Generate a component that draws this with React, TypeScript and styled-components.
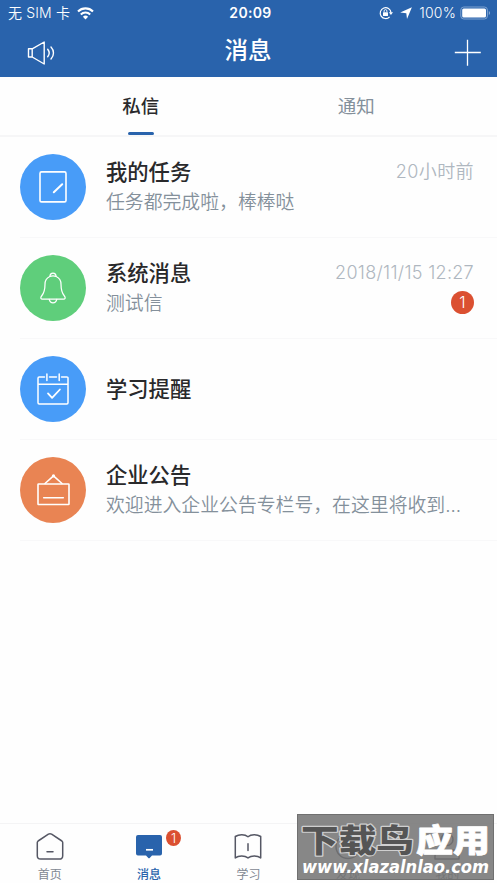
import React from "react";
import styled, { createGlobalStyle } from "styled-components";

const GlobalStyle = createGlobalStyle`
  * { box-sizing: border-box; }
  html, body { margin: 0; padding: 0; background: #fefefe; }
  body { font-family: Inter, "Noto Sans CJK SC", sans-serif; overflow: hidden; }
  svg { display: block; flex: none; }
`;

const Screen = styled.div`
  position: relative;
  display: flex;
  flex-direction: column;
  width: 497px;
  height: 883px;
  background: #fefefe;
  overflow: hidden;
`;

const Header = styled.header`
  height: 77px;
  background: #2963ac;
  color: #fff;
`;

const StatusBar = styled.div`
  display: grid;
  grid-template-columns: 1fr auto 1fr;
  align-items: center;
  height: 26px;
  padding: 0 6px 0 8px;
  font-size: 14px;
  line-height: 20px;
`;

const Carrier = styled.div`
  display: flex;
  align-items: center;
  gap: 7px;
  font-weight: 350;
  letter-spacing: 0.15px;
  white-space: nowrap;
`;

const Clock = styled.div`
  padding-left: 2px;
  font-weight: 600;
  letter-spacing: 0.35px;
`;

const StatusIcons = styled.div`
  display: flex;
  justify-content: flex-end;
  align-items: center;
`;

const BatteryText = styled.span`
  margin: 0 4px 0 7px;
  font-size: 14px;
  font-weight: 350;
  letter-spacing: 0.2px;
`;

const NavBar = styled.div`
  display: grid;
  grid-template-columns: 1fr auto 1fr;
  align-items: center;
  height: 51px;
  padding: 2px 15px 0 27px;
`;

const NavTitle = styled.h1`
  margin: 0 13px 0 0;
  padding-bottom: 4px;
  font-size: 23.5px;
  line-height: 34px;
  font-weight: 500;
`;

const NavAction = styled.div`
  justify-self: end;
`;

const Tabs = styled.nav`
  display: flex;
  height: 60px;
  padding: 0 33px;
  border-bottom: 2px solid #f6f6f7;
`;

const Tab = styled.div<{ $active?: boolean }>`
  display: flex;
  flex: 1;
  flex-direction: column;
  align-items: center;
  justify-content: space-between;
  padding-top: 15px;
  color: ${(p) => (p.$active ? "#2a2a2c" : "#84909b")};
  font-size: 18.5px;
  line-height: 28px;
  font-weight: ${(p) => (p.$active ? 500 : 400)};

  &::after {
    content: "";
    width: 26px;
    height: 3px;
    border-radius: 1.5px;
    background: ${(p) => (p.$active ? "#2963ac" : "transparent")};
  }
`;

const List = styled.main`
  flex: 1;
`;

const Row = styled.div`
  display: flex;
  align-items: center;
  height: 101px;
  margin-left: 20px;
  padding: 0 23px 1px 0;
  border-bottom: 1px solid #f8f8f9;
`;

const Avatar = styled.div<{ $color: string }>`
  display: flex;
  flex: none;
  align-items: center;
  justify-content: center;
  width: 66px;
  height: 66px;
  margin-right: 20px;
  border-radius: 50%;
  background: ${(p) => p.$color};
`;

const Body = styled.div`
  flex: 1;
  min-width: 0;
`;

const Line = styled.div`
  display: flex;
  align-items: center;
  justify-content: space-between;
  height: 30px;
`;

const RowTitle = styled.span`
  color: #29292b;
  font-size: 21.3px;
  line-height: 30px;
  font-weight: 500;
`;

const Time = styled.span<{ $spacing?: number }>`
  color: #afb7c0;
  font-size: 18px;
  line-height: 30px;
  font-weight: 350;
  letter-spacing: ${(p) => p.$spacing ?? 0}px;
`;

const Preview = styled.span`
  padding-top: 2px;
  color: #84909b;
  font-size: 18.85px;
  line-height: 30px;
  font-weight: 350;
  white-space: nowrap;
`;

const Badge = styled.span<{ $small?: boolean }>`
  display: flex;
  flex: none;
  align-items: center;
  justify-content: center;
  width: ${(p) => (p.$small ? 15 : 23)}px;
  height: ${(p) => (p.$small ? 16 : 23)}px;
  padding-bottom: ${(p) => (p.$small ? 0 : 1)}px;
  border-radius: 50%;
  background: #db5031;
  color: #fff;
  font-size: ${(p) => (p.$small ? 13 : 16)}px;
  line-height: 1;
  font-weight: 300;
`;

const BottomBar = styled.footer`
  display: grid;
  grid-template-columns: repeat(5, 1fr);
  height: 60px;
  border-top: 1px solid #f4f4f5;
`;

const BottomItem = styled.div<{ $active?: boolean }>`
  display: flex;
  flex-direction: column;
  align-items: center;
  padding-top: 8px;
  color: ${(p) => (p.$active ? "#2963ac" : "#7f8792")};
  font-size: 12px;
  line-height: 18px;
  font-weight: ${(p) => (p.$active ? 500 : 400)};
`;

const IconHolder = styled.div`
  position: relative;
  height: 34px;
`;

const CornerBadge = styled.div`
  position: absolute;
  left: 31px;
  top: -2px;
`;

const Watermark = styled.div`
  position: absolute;
  left: 297px;
  top: 814px;
  width: 197px;
  height: 66px;
`;

const line = { fill: "none", stroke: "currentColor", strokeLinecap: "round", strokeLinejoin: "round" } as const;

const WifiIcon = () => (
  <svg width="17" height="13" viewBox="0 0 17 13">
    <g fill="none" stroke="#fff" strokeWidth="2.1">
      <path d="M1 4.5a10.6 10.6 0 0 1 15 0" />
      <path d="M3.8 7.4a6.7 6.7 0 0 1 9.4 0" />
    </g>
    <path d="M8.5 12.4 5.9 9.7a3.7 3.7 0 0 1 5.2 0z" fill="#fff" />
  </svg>
);

const RotationLockIcon = () => (
  <svg width="14" height="14" viewBox="0 0 14 14">
    <path d="M12 6.6A5.4 5.4 0 1 0 10.6 10.8" fill="none" stroke="#fff" strokeWidth="1.2" />
    <path d="M9.9 6.3H14l-2.05 2.7z" fill="#fff" />
    <rect x="4" y="6.2" width="5" height="3.7" rx=".5" fill="#fff" />
    <path d="M5.1 6.3V5a1.4 1.4 0 0 1 2.8 0v1.3" fill="none" stroke="#fff" strokeWidth=".9" />
  </svg>
);

const LocationIcon = () => (
  <svg width="19" height="12" viewBox="-7 0 19 12">
    <path d="M11.9.2 7 11.9 6.3 6.2.2 5.6z" fill="#fff" />
  </svg>
);

const BatteryIcon = () => (
  <svg width="31" height="14" viewBox="0 0 31 14">
    <rect x=".8" y="1" width="26.6" height="12" rx="3" fill="none" stroke="#7fa3d0" />
    <rect x="2.2" y="2.4" width="23.8" height="9.2" rx="1.5" fill="#fff" />
    <path d="M28.8 5v4c1.6-.5 1.6-3.5 0-4z" fill="#8fafd6" />
  </svg>
);

const SpeakerIcon = () => (
  <svg width="29" height="26" viewBox="0 0 29 26">
    <g {...line} strokeWidth="1.4">
      <path d="M1.5 8.8h3.7L17.2 2v22L5.2 17H1.5zM5.2 8.8V17" />
      <path d="M20.7 9.3c1.8 2.2 1.8 5.2 0 7.4M24 7c3.3 3.5 3.3 8.5 0 12" />
    </g>
  </svg>
);

const PlusIcon = () => (
  <svg width="28" height="28" viewBox="0 0 28 28">
    <path d="M.8 13.5h26M13.5.8v26" stroke="#fff" strokeWidth="1.3" />
  </svg>
);

const TaskIcon = () => (
  <svg width="28" height="32" viewBox="0 0 28 32" color="#fff">
    <rect x="1" y=".9" width="26" height="30" rx="1.5" {...line} strokeWidth="1.6" />
    <path d="m14.8 21.3 8.4-8" {...line} strokeWidth="2" />
  </svg>
);

const BellIcon = () => (
  <svg width="28" height="32" viewBox="0 0 28 32" color="#fff">
    <g {...line} strokeWidth="1.25">
      <path d="M10.8 4.5C7.4 6 6 8.7 6 12.3c0 6-.8 8.7-3.4 11.7-1.4 1.6-.8 3.2.9 3.2h21c1.7 0 2.3-1.6.9-3.2-2.6-3-3.4-5.7-3.4-11.7 0-3.6-1.4-6.3-4.8-7.8-2-.8-4.4-.8-6.4 0z" />
      <path d="M10.9 4.2C11 2.1 12 1 14 1s3 1.1 3.1 3.2M10.2 27.4c.6 2.3 1.8 3.4 3.8 3.4s3.2-1.1 3.8-3.4" />
    </g>
  </svg>
);

const CalendarIcon = () => (
  <svg width="32" height="32" viewBox="0 0 32 32" color="#fff">
    <g {...line} strokeWidth="1.5">
      <path d="M7.5 4H2.2C1.4 4 1 4.4 1 5.2v24.6c0 .8.4 1.2 1.2 1.2h27.6c.8 0 1.2-.4 1.2-1.2V5.2c0-.8-.4-1.2-1.2-1.2h-5.3M12.5 4h7M1 11.2h30M9.9 1v6.5M22.2 1v6.5" />
      <path d="m11 20.4 4.1 4.4 7.8-8.3" strokeWidth="1.8" />
    </g>
  </svg>
);

const BoardIcon = () => (
  <svg width="33" height="32" viewBox="0 0 33 32" color="#fff">
    <g {...line} strokeWidth="1.6">
      <rect x="1" y="10" width="31" height="20.5" rx=".6" />
      <path d="m8 9.5 8.5-7.7L25 9.5M6.7 23.8h19.6" />
    </g>
    <circle cx="16.5" cy="1.9" r="1.6" fill="#fff" />
  </svg>
);

const HomeIcon = () => (
  <svg width="28" height="29" viewBox="0 0 28 29" color="#555764">
    <path d="M2.1 9 12.4 2.2q1.6-1 3.2 0L25.9 9q.8.6.8 1.6v13.1c0 2.4-1 3.4-3.4 3.4H4.7c-2.4 0-3.4-1-3.4-3.4V10.6Q1.3 9.6 2.1 9zM11 19.8h6" {...line} strokeWidth="1.5" />
  </svg>
);

const MessageIcon = () => (
  <svg width="28" height="29" viewBox="0 0 28 29">
    <path d="M3 3h22q2 0 2 2v16.5q0 2-2 2h-8L14.7 26q-.7.6-1.4 0L11 23.5H3q-2 0-2-2V5q0-2 2-2z" fill="#2963ac" />
    <path d="M11 17.8h7" stroke="#fff" strokeWidth="1.7" />
  </svg>
);

const BookIcon = () => (
  <svg width="28" height="29" viewBox="0 0 28 29" color="#555764">
    <path d="M14 4.8C10.8 2 5 2.1 1.3 4.5v21.4c3.3-2.4 9.3-2.6 12.7 0 3.4-2.6 9.4-2.4 12.7 0V4.5C23 2.1 17.2 2 14 4.8zM14 11.7v6.8" {...line} strokeWidth="1.5" />
  </svg>
);

const CompassIcon = () => (
  <svg width="28" height="29" viewBox="0 0 28 29" color="#555764">
    <circle cx="14" cy="14.5" r="12" {...line} strokeWidth="1.5" />
    <path d="m11 12 7-3-3 8-6 3z" {...line} strokeWidth="1.5" />
  </svg>
);

const PersonIcon = () => (
  <svg width="28" height="29" viewBox="0 0 28 29" color="#555764">
    <path d="M8 7.5a6 6 0 1 1 12 0 6 6 0 0 1-12 0zM2 27v-3c0-4 2-6 6-6h12c4 0 6 2 6 6v3z" {...line} strokeWidth="1.5" />
  </svg>
);

const WatermarkArt = () => (
  <svg width="197" height="66" viewBox="0 0 197 66">
    <rect x=".5" y=".5" width="196" height="65" fill="#727272" fillOpacity=".85" stroke="#707070" />
    <g fontFamily='"Noto Sans CJK SC", sans-serif' fontSize="31.5" fontWeight="900" paintOrder="stroke" strokeLinejoin="round">
      <text x="4" y="38" textLength="113" lengthAdjust="spacingAndGlyphs" fill="#555" stroke="#cfcfcf" strokeWidth="2.4">下载鸟</text>
      <text x="119" y="38" textLength="74" lengthAdjust="spacingAndGlyphs" fill="#fff" stroke="#fff" strokeWidth=".8">应用</text>
    </g>
    <text x="5" y="59" textLength="187" lengthAdjust="spacingAndGlyphs" fontFamily='"DejaVu Sans", sans-serif' fontSize="18" fontWeight="700" fontStyle="italic" fill="#fff">www.xlazalnlao.com</text>
  </svg>
);

type Message = {
  title: string;
  color: string;
  icon: React.ReactNode;
  preview?: string;
  time?: string;
  spacing?: number;
  unread?: number;
};

const messages: Message[] = [
  { title: "我的任务", color: "#489cf8", icon: <TaskIcon />, preview: "任务都完成啦，棒棒哒", time: "20小时前", spacing: 0.4 },
  { title: "系统消息", color: "#5fce7b", icon: <BellIcon />, preview: "测试信", time: "2018/11/15 12:27", spacing: 0.3, unread: 1 },
  { title: "学习提醒", color: "#489cf8", icon: <CalendarIcon /> },
  { title: "企业公告", color: "#e98453", icon: <BoardIcon />, preview: "欢迎进入企业公告专栏号，在这里将收到..." },
];

const bottomItems = [
  { label: "首页", icon: <HomeIcon /> },
  { label: "消息", icon: <MessageIcon />, active: true, unread: 1 },
  { label: "学习", icon: <BookIcon /> },
  { label: "发现", icon: <CompassIcon /> },
  { label: "我的", icon: <PersonIcon /> },
];

export default function App() {
  return (
    <Screen>
      <GlobalStyle />
      <Header>
        <StatusBar>
          <Carrier>无 SIM 卡<WifiIcon /></Carrier>
          <Clock>20:09</Clock>
          <StatusIcons>
            <RotationLockIcon />
            <LocationIcon />
            <BatteryText>100%</BatteryText>
            <BatteryIcon />
          </StatusIcons>
        </StatusBar>
        <NavBar>
          <SpeakerIcon />
          <NavTitle>消息</NavTitle>
          <NavAction><PlusIcon /></NavAction>
        </NavBar>
      </Header>
      <Tabs>
        <Tab $active>私信</Tab>
        <Tab>通知</Tab>
      </Tabs>
      <List>
        {messages.map((m) => (
          <Row key={m.title}>
            <Avatar $color={m.color}>{m.icon}</Avatar>
            <Body>
              <Line>
                <RowTitle>{m.title}</RowTitle>
                {m.time && <Time $spacing={m.spacing}>{m.time}</Time>}
              </Line>
              {m.preview && (
                <Line>
                  <Preview>{m.preview}</Preview>
                  {m.unread && <Badge>{m.unread}</Badge>}
                </Line>
              )}
            </Body>
          </Row>
        ))}
      </List>
      <BottomBar>
        {bottomItems.map((item) => (
          <BottomItem key={item.label} $active={item.active}>
            <IconHolder>
              {item.icon}
              {item.unread && <CornerBadge><Badge $small>{item.unread}</Badge></CornerBadge>}
            </IconHolder>
            {item.label}
          </BottomItem>
        ))}
      </BottomBar>
      <Watermark><WatermarkArt /></Watermark>
    </Screen>
  );
}
